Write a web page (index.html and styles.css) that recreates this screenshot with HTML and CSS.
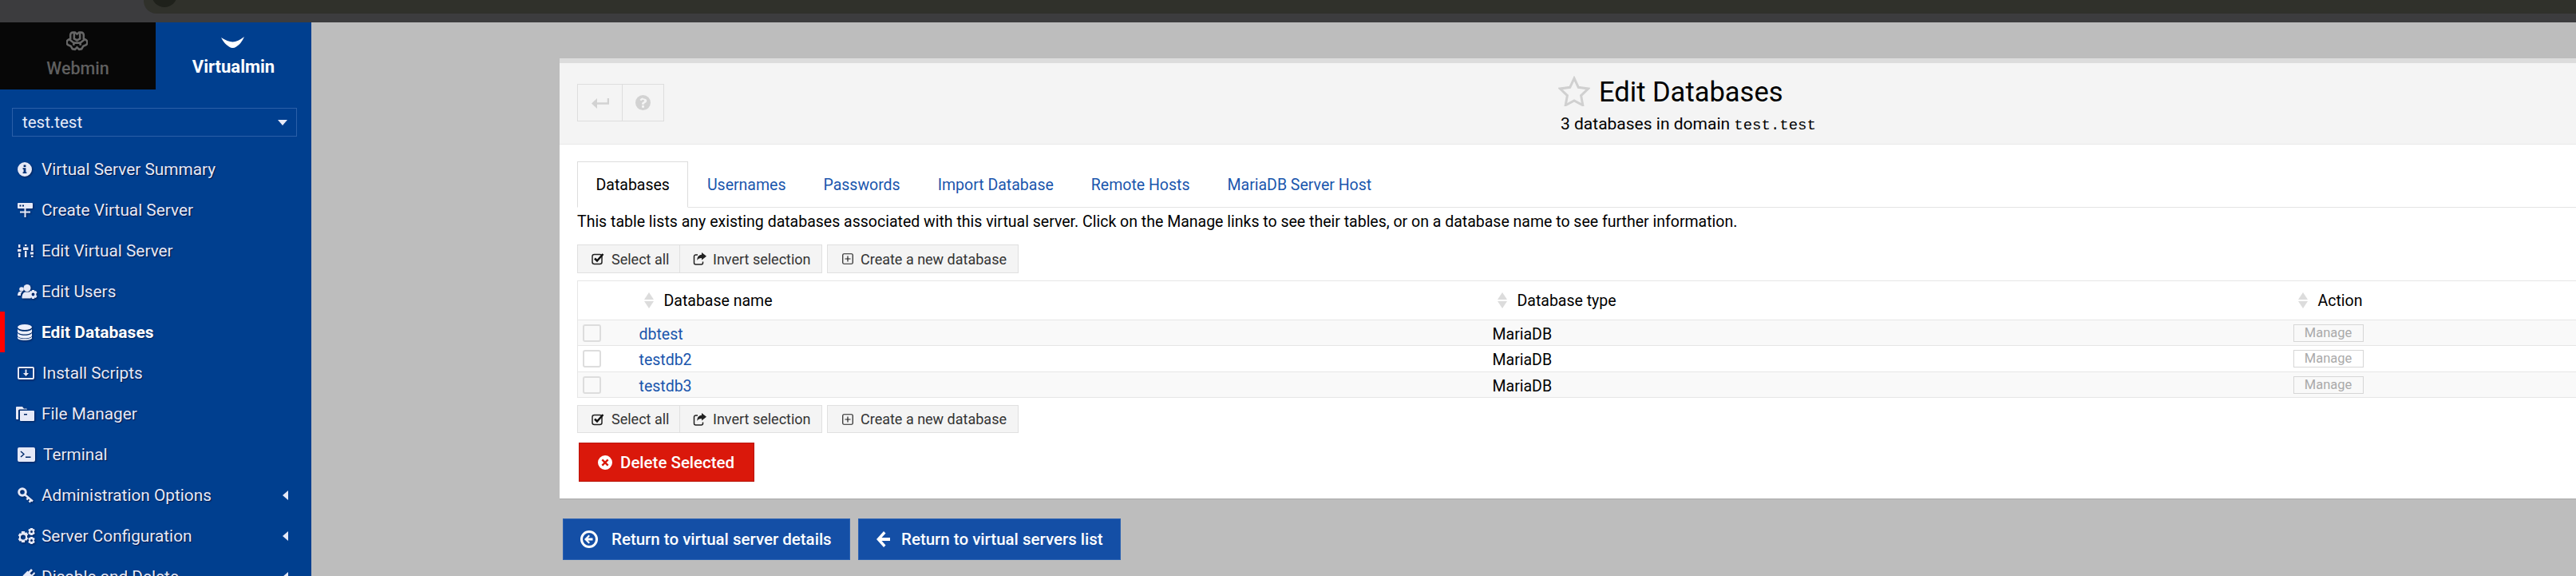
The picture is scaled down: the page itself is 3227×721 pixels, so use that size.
FILE: index.html
```html
<!DOCTYPE html>
<html lang="en">
<head>
<meta charset="utf-8">
<title>Edit Databases</title>
<link rel="stylesheet" href="styles.css">
</head>
<body>
<header class="chrome"><div class="address"><span class="address-dot"></span></div></header>
<div class="page">
  <aside class="sidebar">
    <div class="switch">
      <a class="switch-tab switch-webmin">
        <svg class="logo-webmin" viewBox="0 0 26 24"><path d="M8 1.500h2.500L13 3.500l2.500-2h2.500a3 3 0 0 1 3 3V9l2 1a3.800 3.800 0 0 1 1 6.500l-3.500 1.500-2 3.500-3 .5-2.500-2.500-2.500 2.500-3-.5-2-3.500-3.500-1.500a3.800 3.800 0 0 1 1-6.500l2-1V4.500a3 3 0 0 1 3-3z"/><path d="M9.500 2.500V9L13 11l3.500-2V2.500M4 10l5 4v3M22 10l-5 4v3M9 14h8"/></svg>
        <span>Webmin</span>
      </a>
      <a class="switch-tab switch-virtualmin">
        <svg class="logo-virtualmin" viewBox="0 0 29 15"><path d="M0 1Q8 6 14.500 6.500 21 6 29 0 25 9 19 12.500 14.500 15.500 10 12.500 4 9 0 1z"/></svg>
        <span>Virtualmin</span>
      </a>
    </div>
    <div class="domain"><span>test.test</span><i class="caret-down"></i></div>
    <nav class="menu">
      <a class="menu-item">
        <span class="menu-icon"><svg viewBox="0 0 18 18" width="18" height="18"><path fill-rule="evenodd" d="M9 0a9 9 0 1 1 0 18A9 9 0 0 1 9 0zM7.600 3.500v2.600h2.800V3.500zM6.600 7.300v1.600h1v3.500h-1V14h4.800v-1.600h-1V7.300z"/></svg></span>
        <span>Virtual Server Summary</span>
      </a>
      <a class="menu-item">
        <span class="menu-icon"><svg viewBox="0 0 19 18" width="19" height="18"><path fill-rule="evenodd" d="M1 0h17a1 1 0 0 1 1 1v5a1 1 0 0 1-1 1H1a1 1 0 0 1-1-1V1a1 1 0 0 1 1-1zM2.500 2.500v2h2v-2zm3.500 0v2h2v-2z"/><path d="M8.500 7h2v3.500H16v2h-5.500V18h-2v-5.500H3v-2h5.500z"/></svg></span>
        <span>Create Virtual Server</span>
      </a>
      <a class="menu-item">
        <span class="menu-icon"><svg viewBox="0 0 20 16" width="20" height="16"><path d="M1 0h2.500v4H1zM0 6h4.500v3H0zM1 10.500h2.500V16H1zM9 0h2.500v2H9zM7 3.500h6.500V7H7zM9 8h2.500v8H9zM17 0h2.500v8H17zM16 9.500h4.500v3H16zM17 14h2.500v2H17z"/></svg></span>
        <span>Edit Virtual Server</span>
      </a>
      <a class="menu-item">
        <span class="menu-icon"><svg viewBox="0 0 25 18" width="25" height="18"><circle cx="5" cy="6" r="2.800"/><circle cx="12" cy="4.500" r="4.500"/><path d="M0 14c0-3 1-5 3-5h3C4 11 4 12 4 14zM5.500 17c0-5 2-7.500 5-7.500h4q2 0 2.500 1-1.500 3-.5 7H7q-1.500 0-1.500-.5z"/><path fill-rule="evenodd" d="M18 7h3l.4 1.600 1.600-.6 1.500 2.500-1.200 1 .1 1-.1 1 1.200 1-1.500 2.500-1.600-.6L21 18h-3l-.4-1.600-1.600.6-1.500-2.500 1.200-1-.1-1 .1-1-1.200-1 1.500-2.500 1.600.6zm1.500 3.600a1.900 1.900 0 1 0 0 3.800 1.900 1.900 0 0 0 0-3.800z"/></svg></span>
        <span>Edit Users</span>
      </a>
      <a class="menu-item menu-active">
        <span class="menu-icon"><svg viewBox="0 0 18 20" width="18" height="20"><ellipse cx="9" cy="3.500" rx="9" ry="3.500"/><path d="M0 6c2 2.300 6 2.800 9 2.800S16 8.300 18 6v3c0 2-4 3.500-9 3.500S0 11 0 9zM0 11c2 2.300 6 2.800 9 2.800s7-.5 9-2.800v3c0 2-4 3.500-9 3.500S0 16 0 14z"/><path d="M0 15.500c2 2.300 6 2.800 9 2.800s7-.5 9-2.800V17c0 1.800-4 3-9 3s-9-1.200-9-3z"/></svg></span>
        <span>Edit Databases</span>
      </a>
      <a class="menu-item">
        <span class="menu-icon"><svg viewBox="0 0 21 16" width="21" height="16"><path fill-rule="evenodd" d="M2 0h17a2 2 0 0 1 2 2v12a2 2 0 0 1-2 2H2a2 2 0 0 1-2-2V2a2 2 0 0 1 2-2zm0 2v12h17V2z"/><path d="M9.500 3.500h2v4.500H14L10.500 12 7 8h2.500z"/></svg></span>
        <span class="menu-label-nudge-1">Install Scripts</span>
      </a>
      <a class="menu-item">
        <span class="menu-icon menu-icon-wide"><svg viewBox="0 0 23 18" width="23" height="18"><path fill-rule="evenodd" d="M1 0h7l2 2.500h3q1 0 1 1H4.500Q3 3.500 3 5v11H1q-1 0-1-1V1q0-1 1-1zM5 5h17q1 0 1 1v11q0 1-1 1H6q-1 0-1-1zM10 9v1.600h4V9z"/></svg></span>
        <span>File Manager</span>
      </a>
      <a class="menu-item">
        <span class="menu-icon"><svg viewBox="0 0 22 18" width="22" height="18"><path fill-rule="evenodd" d="M2 0h18a2 2 0 0 1 2 2v14a2 2 0 0 1-2 2H2a2 2 0 0 1-2-2V2a2 2 0 0 1 2-2zm2.500 4.500-1 1L7 8.500l-3.500 3 1 1L9 8.500zM10 11.500V13h6.500v-1.500z"/></svg></span>
        <span class="menu-label-nudge-2">Terminal</span>
      </a>
      <a class="menu-item">
        <span class="menu-icon"><svg viewBox="0 0 20 20" width="20" height="20"><circle cx="6" cy="6" r="4.300" class="key-ring"/><path d="M9 9l10 8.500M13.500 13l-2 2.500M17 16l-2.500 2.500" class="key-shaft"/></svg></span>
        <span>Administration Options</span>
        <i class="caret-left"></i>
      </a>
      <a class="menu-item">
        <span class="menu-icon"><svg viewBox="0 0 22 20" width="22" height="20"><path fill-rule="evenodd" d="M5 4h4l.5 2 1.800-.8 2 3-1.300 1.300.1 1-.1 1 1.300 1.300-2 3-1.800-.8L9 18H5l-.5-2-1.800.8-2-3L2 12.500 1.900 11.500 2 10.500.7 9.200l2-3 1.800.8zm2 4.500a3 3 0 1 0 0 6 3 3 0 0 0 0-6z"/><path fill-rule="evenodd" d="M16 0h3l.4 1.300 1.400-.4.9 2-1 1v1.200l1 1-.9 2-1.400-.4L19 9h-3l-.4-1.300-1.400.4-.9-2 1-1V3.900l-1-1 .9-2 1.400.4zm1.500 3a1.500 1.500 0 1 0 0 3 1.500 1.500 0 0 0 0-3zM16 11h3l.4 1.300 1.400-.4.9 2-1 1v1.200l1 1-.9 2-1.400-.4L19 20h-3l-.4-1.300-1.400.4-.9-2 1-1v-1.200l-1-1 .9-2 1.400.4zm1.500 3a1.500 1.500 0 1 0 0 3 1.500 1.500 0 0 0 0-3z"/></svg></span>
        <span>Server Configuration</span>
        <i class="caret-left"></i>
      </a>
      <a class="menu-item">
        <span class="menu-icon"><svg viewBox="0 0 22 20" width="22" height="20"><path d="M17 0l2 2-3.500 3.500 2 2L21 4l1 2-3.500 3.500 1 1-5 5q-3 3-6.500 1L5 20l-2-2 3.500-4q-2-3.500 1-6.500l5-5 1 1z"/></svg></span>
        <span>Disable and Delete</span>
        <i class="caret-left"></i>
      </a>
    </nav>
  </aside>

  <main class="content">
    <section class="panel">
      <div class="panel-head">
        <div class="head-buttons">
          <a class="head-btn head-btn-back"><svg viewBox="0 0 22 14" width="22" height="14"><path d="M21 1v6.500H5" class="stroke-wide"/><path d="M7 1 0 7.500 7 14z"/></svg></a>
          <a class="head-btn head-btn-help"><svg viewBox="0 0 19 19" width="19" height="19"><path fill-rule="evenodd" d="M9.500 0a9.500 9.500 0 1 1 0 19 9.500 9.500 0 0 1 0-19zM9.700 3.500C7.600 3.500 6.300 4.500 5.500 6l1.800 1.300C7.900 6.500 8.400 6 9.500 6c.8 0 1.500.5 1.500 1.200 0 .6-.5 1-1.300 1.400-1 .6-1.700 1.200-1.700 2.600v.6h3v-.4c0-.6.400-.9 1.100-1.300 1.100-.6 2.100-1.400 2.100-3 0-2-2.100-2.900-4.500-2.900zM8 13v2.800h3V13z"/></svg></a>
        </div>
        <div class="head-title">
          <div class="title-row">
            <svg class="star" viewBox="0 0 40 38"><path d="M20 3l5.300 11.300 12.200 1.700-8.900 8.600 2.200 12.100L20 30.900 9.200 36.700l2.200-12.100L2.500 16l12.200-1.700z"/></svg>
            <h1>Edit Databases</h1>
          </div>
          <p class="subtitle">3 databases in domain <code>test.test</code></p>
        </div>
      </div>

      <div class="panel-body">
        <ul class="tabs">
          <li class="tab tab-active">Databases</li>
          <li class="tab"><a>Usernames</a></li>
          <li class="tab"><a>Passwords</a></li>
          <li class="tab"><a>Import Database</a></li>
          <li class="tab"><a>Remote Hosts</a></li>
          <li class="tab"><a>MariaDB Server Host</a></li>
        </ul>
        <p class="intro">This table lists any existing databases associated with this virtual server. Click on the Manage links to see their tables, or on a database name to see further information.</p>

        <div class="toolbar">
          <div class="btn-group">
            <a class="tool-btn tool-select"><svg viewBox="0 0 16 16" width="16" height="16"><rect x="1" y="2.500" width="12" height="12" rx="2.500" class="outline"/><path d="M4 7.500l3 3L14.500 2" class="check"/></svg>Select all</a>
            <a class="tool-btn tool-invert"><svg viewBox="0 0 17 16" width="17" height="16"><path d="M6 3H3.500A2 2 0 0 0 1.500 5v8a2 2 0 0 0 2 2h7a2 2 0 0 0 2-2v-1.500" class="outline"/><path d="M11 0l6 4.800-6 4.800V7C8 7 6 8 5.500 10 5 6 7 3 11 2.700z"/></svg>Invert selection</a>
          </div>
          <a class="tool-btn tool-create"><svg viewBox="0 0 14 14" width="14" height="14"><rect x=".75" y=".75" width="12.500" height="12.500" rx="1.500" class="outline-thin"/><path d="M7 3.500v7M3.500 7h7" class="outline-thin"/></svg>Create a new database</a>
        </div>

        <table class="db-table">
          <colgroup><col class="col-check"><col class="col-name"><col class="col-type"><col></colgroup>
          <thead>
            <tr>
              <th></th>
              <th><span class="th-inner"><i class="sort"></i>Database name</span></th>
              <th><span class="th-inner"><i class="sort"></i>Database type</span></th>
              <th><span class="th-inner"><i class="sort"></i>Action</span></th>
            </tr>
          </thead>
          <tbody>
            <tr class="row-a">
              <td><span class="check-box"></span></td>
              <td class="td-text"><a class="db-link">dbtest</a></td>
              <td class="td-text">MariaDB</td>
              <td><a class="manage">Manage</a></td>
            </tr>
            <tr class="row-b">
              <td><span class="check-box"></span></td>
              <td class="td-text"><a class="db-link">testdb2</a></td>
              <td class="td-text">MariaDB</td>
              <td><a class="manage">Manage</a></td>
            </tr>
            <tr class="row-a">
              <td><span class="check-box"></span></td>
              <td class="td-text"><a class="db-link">testdb3</a></td>
              <td class="td-text">MariaDB</td>
              <td><a class="manage">Manage</a></td>
            </tr>
          </tbody>
        </table>

        <div class="toolbar toolbar-bottom">
          <div class="btn-group">
            <a class="tool-btn tool-select"><svg viewBox="0 0 16 16" width="16" height="16"><rect x="1" y="2.500" width="12" height="12" rx="2.500" class="outline"/><path d="M4 7.500l3 3L14.500 2" class="check"/></svg>Select all</a>
            <a class="tool-btn tool-invert"><svg viewBox="0 0 17 16" width="17" height="16"><path d="M6 3H3.500A2 2 0 0 0 1.500 5v8a2 2 0 0 0 2 2h7a2 2 0 0 0 2-2v-1.500" class="outline"/><path d="M11 0l6 4.800-6 4.800V7C8 7 6 8 5.500 10 5 6 7 3 11 2.700z"/></svg>Invert selection</a>
          </div>
          <a class="tool-btn tool-create"><svg viewBox="0 0 14 14" width="14" height="14"><rect x=".75" y=".75" width="12.500" height="12.500" rx="1.500" class="outline-thin"/><path d="M7 3.500v7M3.500 7h7" class="outline-thin"/></svg>Create a new database</a>
        </div>

        <a class="btn-delete"><svg viewBox="0 0 18 18" width="18" height="18"><path fill-rule="evenodd" d="M9 0a9 9 0 1 1 0 18A9 9 0 0 1 9 0zM6.200 4.500 4.500 6.200 7.300 9l-2.800 2.800 1.700 1.700L9 10.700l2.800 2.800 1.700-1.700L10.700 9l2.800-2.800-1.700-1.700L9 7.300z"/></svg>Delete Selected</a>
      </div>
    </section>

    <div class="return-row">
      <a class="btn-return btn-return-details"><svg viewBox="0 0 22 22" width="22" height="22"><path fill-rule="evenodd" d="M11 0a11 11 0 1 1 0 22 11 11 0 0 1 0-22zm0 3a8 8 0 1 0 0 16 8 8 0 0 0 0-16zm-.500 2.500 1.500 1.500-2.500 2.500h6v3h-6L12 15l-1.500 1.500L5 11z"/></svg>Return to virtual server details</a>
      <a class="btn-return btn-return-list"><svg viewBox="0 0 17 22" width="17" height="22"><path d="M9 1l2.500 2.500L6.500 9H17v4H6.500l5 5.500L9 21 0 11z"/></svg>Return to virtual servers list</a>
    </div>
  </main>
</div>
</body>
</html>
```

FILE: styles.css
```css
* { box-sizing: border-box; }
html, body { margin: 0; height: 100%; overflow: hidden; }
body {
  width: 3227px;
  height: 721px;
  background: #bdbdbd;
  font-family: Roboto, "Liberation Sans", sans-serif;
  color: #000;
}
a { text-decoration: none; }

/* Browser strip */
.chrome { height: 28px; background: #3c3c3e; padding-left: 180px; }
.address {
  height: 17px;
  background: #30312b;
  border-bottom-left-radius: 16px;
  overflow: hidden;
  padding-left: 10px;
}
.address-dot {
  display: block;
  width: 32px;
  height: 32px;
  margin-top: -23px;
  border-radius: 50%;
  background: #1f211b;
}

.page { display: flex; height: 693px; }

/* Sidebar */
.sidebar { width: 390px; flex: none; background: #003f8f; overflow: hidden; }
.switch { display: flex; height: 84px; }
.switch-tab {
  flex: 1;
  display: flex;
  flex-direction: column;
  align-items: center;
  line-height: 25px;
}
.switch-webmin { background: #070707; color: #5f5f5f; font-size: 21.500px; font-weight: 500; padding-top: 11px; }
.switch-virtualmin { color: #fff; font-size: 22px; font-weight: 700; padding-top: 18px; }
.logo-webmin { width: 27px; height: 25px; fill: none; stroke: #666; stroke-width: 2.500; margin-bottom: 9px; margin-right: 3px; }
.logo-virtualmin { width: 29px; height: 15px; fill: #fff; margin-bottom: 10px; margin-left: -3px; }
.domain {
  margin: 23px 18px 0 15px;
  height: 36px;
  border: 1px solid #2b5fa8;
  display: flex;
  align-items: center;
  justify-content: space-between;
  padding: 0 12px;
  color: #e8ebf8;
  font-size: 20.500px;
}
.caret-down { width: 0; height: 0; border: 6px solid transparent; border-top: 7px solid #e8ebf8; border-bottom: 0; margin-right: -1px; }
.menu { margin-top: 15px; }
.menu-item {
  display: flex;
  align-items: center;
  height: 51px;
  padding-left: 22px;
  padding-right: 29px;
  color: #e6e9f7;
  font-size: 20.800px;
  text-shadow: 1px 1px 1px rgba(0, 10, 50, .75);
  white-space: nowrap;
}
.menu-item svg { fill: #e6e9f7; filter: drop-shadow(1px 1px 1px rgba(0, 10, 50, .6)); display: block; }
.menu-item .key-ring, .menu-item .key-shaft { fill: none; stroke: #e6e9f7; stroke-width: 3; }
.menu-item .key-shaft { stroke-width: 2.500; }
.menu-icon { width: 30px; flex: none; display: flex; }
.menu-icon-wide svg { margin-left: -2px; }
.menu-label-nudge-1 { margin-left: 1px; }
.menu-label-nudge-2 { margin-left: 2px; }
.menu-active {
  color: #fff;
  font-size: 21px;
  font-weight: 700;
  box-shadow: inset 6px 0 0 #f00;
  text-shadow: 1px 1px 1px rgba(0, 10, 50, .5);
}
.menu-active svg { fill: #eef0fb; }
.caret-left {
  margin-left: auto;
  width: 0; height: 0;
  border: 6px solid transparent;
  border-right: 7px solid #e6e9f7;
  border-left: 0;
}

/* Main */
.content { flex: 1; min-width: 0; padding: 45px 0 0 311px; overflow: hidden; }
.panel {
  background: #fff;
  border-top: 6px solid #dcdcdc;
  border-bottom: 1px solid #a9a9a9;
  height: 552px;
  overflow: hidden;
}
.panel-head {
  height: 102px;
  background: #f4f4f4;
  border-bottom: 1px solid #e9e9e9;
  display: flex;
  padding: 26px 0 0 22px;
}
.head-buttons { display: flex; height: 47px; width: 109px; flex: none; }
.head-btn {
  display: flex;
  align-items: center;
  justify-content: center;
  border: 1px solid #ddd;
  height: 47px;
}
.head-btn svg { fill: #d2d2d2; }
.head-btn-back { width: 57px; }
.head-btn-help { width: 53px; margin-left: -1px; }
.stroke-wide { fill: none; stroke: #d2d2d2; stroke-width: 2.500; }
.head-title { margin-left: 1120px; margin-top: -10px; }
.title-row { display: flex; align-items: center; height: 40px; }
.star { width: 40px; height: 38px; fill: none; stroke: #d0d0d0; stroke-width: 3; margin-right: 11px; margin-top: -2px; }
h1 { margin: 0; font-size: 34.500px; font-weight: 400; line-height: 40px; }
.subtitle { margin: 7px 0 0 3px; font-size: 21px; line-height: 26px; white-space: nowrap; }
code { font-family: "Liberation Mono", monospace; font-size: 19px; }

.panel-body { padding: 21px 0 0 22px; }
.tabs {
  list-style: none;
  display: flex;
  margin: 0;
  padding: 0;
  height: 58px;
  border-bottom: 1px solid #e4e4e4;
  font-size: 19.500px;
  width: 2600px;
}
.tab { padding: 0 22.500px; height: 58px; line-height: 57px; border: 1px solid transparent; white-space: nowrap; }
.tab a { color: #1a56ad; }
.tab-active { border-color: #ddd; border-bottom: 1px solid #fff; background: #fff; }
.intro { margin: 0; height: 46px; padding-top: 5px; line-height: 26px; font-size: 19.500px; white-space: nowrap; }
.toolbar { display: flex; gap: 6px; height: 36px; font-size: 18px; white-space: nowrap; }
.toolbar-bottom { margin-top: 9px; height: 35px; }
.btn-group { display: flex; }
.tool-btn {
  display: flex;
  align-items: center;
  height: 100%;
  background: #f4f4f4;
  border: 1px solid #e0e0e0;
  color: #333;
}
.tool-btn svg { fill: #222; }
.tool-select { width: 129px; padding-left: 17px; }
.tool-select svg { margin-right: 9px; }
.tool-invert { width: 179px; margin-left: -1px; padding-left: 16px; }
.tool-invert svg { margin-right: 8px; }
.tool-create { width: 240px; padding-left: 18px; }
.tool-create svg { margin-right: 9px; }
.outline { fill: none; stroke: #222; stroke-width: 1.500; }
.outline-thin { fill: none; stroke: #222; stroke-width: 1.200; }
.check { fill: none; stroke: #111; stroke-width: 2.500; }

.db-table {
  margin-top: 9px;
  width: 2600px;
  table-layout: fixed;
  border-collapse: collapse;
  font-size: 19.500px;
}
.col-check { width: 77px; }
.col-name { width: 1069px; }
.col-type { width: 1003px; }
.db-table tr { border: 1px solid #e6e6e6; }
.db-table thead tr { height: 49px; }
.db-table tbody tr { height: 32px; }
.db-table tbody tr.row-b { height: 33px; }
.db-table th { font-weight: 400; text-align: left; padding: 0; }
.db-table td { padding: 0; white-space: nowrap; vertical-align: middle; }
.db-table .td-text { padding-top: 3px; }
.th-inner { display: flex; align-items: center; padding-left: 6px; }
.sort { width: 12px; height: 20px; margin-right: 13px; flex: none; display: block; }
.sort::before, .sort::after {
  content: "";
  display: block;
  width: 0; height: 0;
  border-left: 6px solid transparent;
  border-right: 6px solid transparent;
}
.sort::before { border-bottom: 9px solid #dcdcdc; margin-bottom: 2px; }
.sort::after { border-top: 9px solid #dcdcdc; }
.row-a { background: #f9f9f9; }
.row-b { background: #fff; }
.db-link { color: #1a56ad; }
.check-box {
  display: block;
  width: 23px;
  height: 22px;
  margin-left: 6px;
  border: 2px solid #ddd;
  border-radius: 3px;
}
.manage {
  display: block;
  width: 88px;
  height: 22px;
  border: 1px solid #d6d6d6;
  color: #aaa;
  font-size: 16.500px;
  line-height: 20px;
  text-align: center;
}
.btn-delete {
  display: flex;
  align-items: center;
  margin: 12px 0 0 2px;
  width: 220px;
  height: 49px;
  background: #da180b;
  border: 1px solid #b91408;
  color: #fff;
  font-size: 20.500px;
  font-weight: 500;
  padding-left: 23px;
}
.btn-delete svg { fill: #fff; margin-right: 10px; }

.return-row { display: flex; gap: 10px; margin: 24px 0 0 4px; }
.btn-return {
  display: flex;
  align-items: center;
  height: 52px;
  background: #144fa6;
  border: 1px solid #2b62b2;
  color: #fff;
  font-size: 20.500px;
  font-weight: 500;
  white-space: nowrap;
}
.btn-return svg { fill: #fff; }
.btn-return-details { width: 360px; padding-left: 21px; }
.btn-return-details svg { margin-right: 17px; }
.btn-return-list { width: 329px; padding-left: 22px; }
.btn-return-list svg { margin-right: 14px; }
```
